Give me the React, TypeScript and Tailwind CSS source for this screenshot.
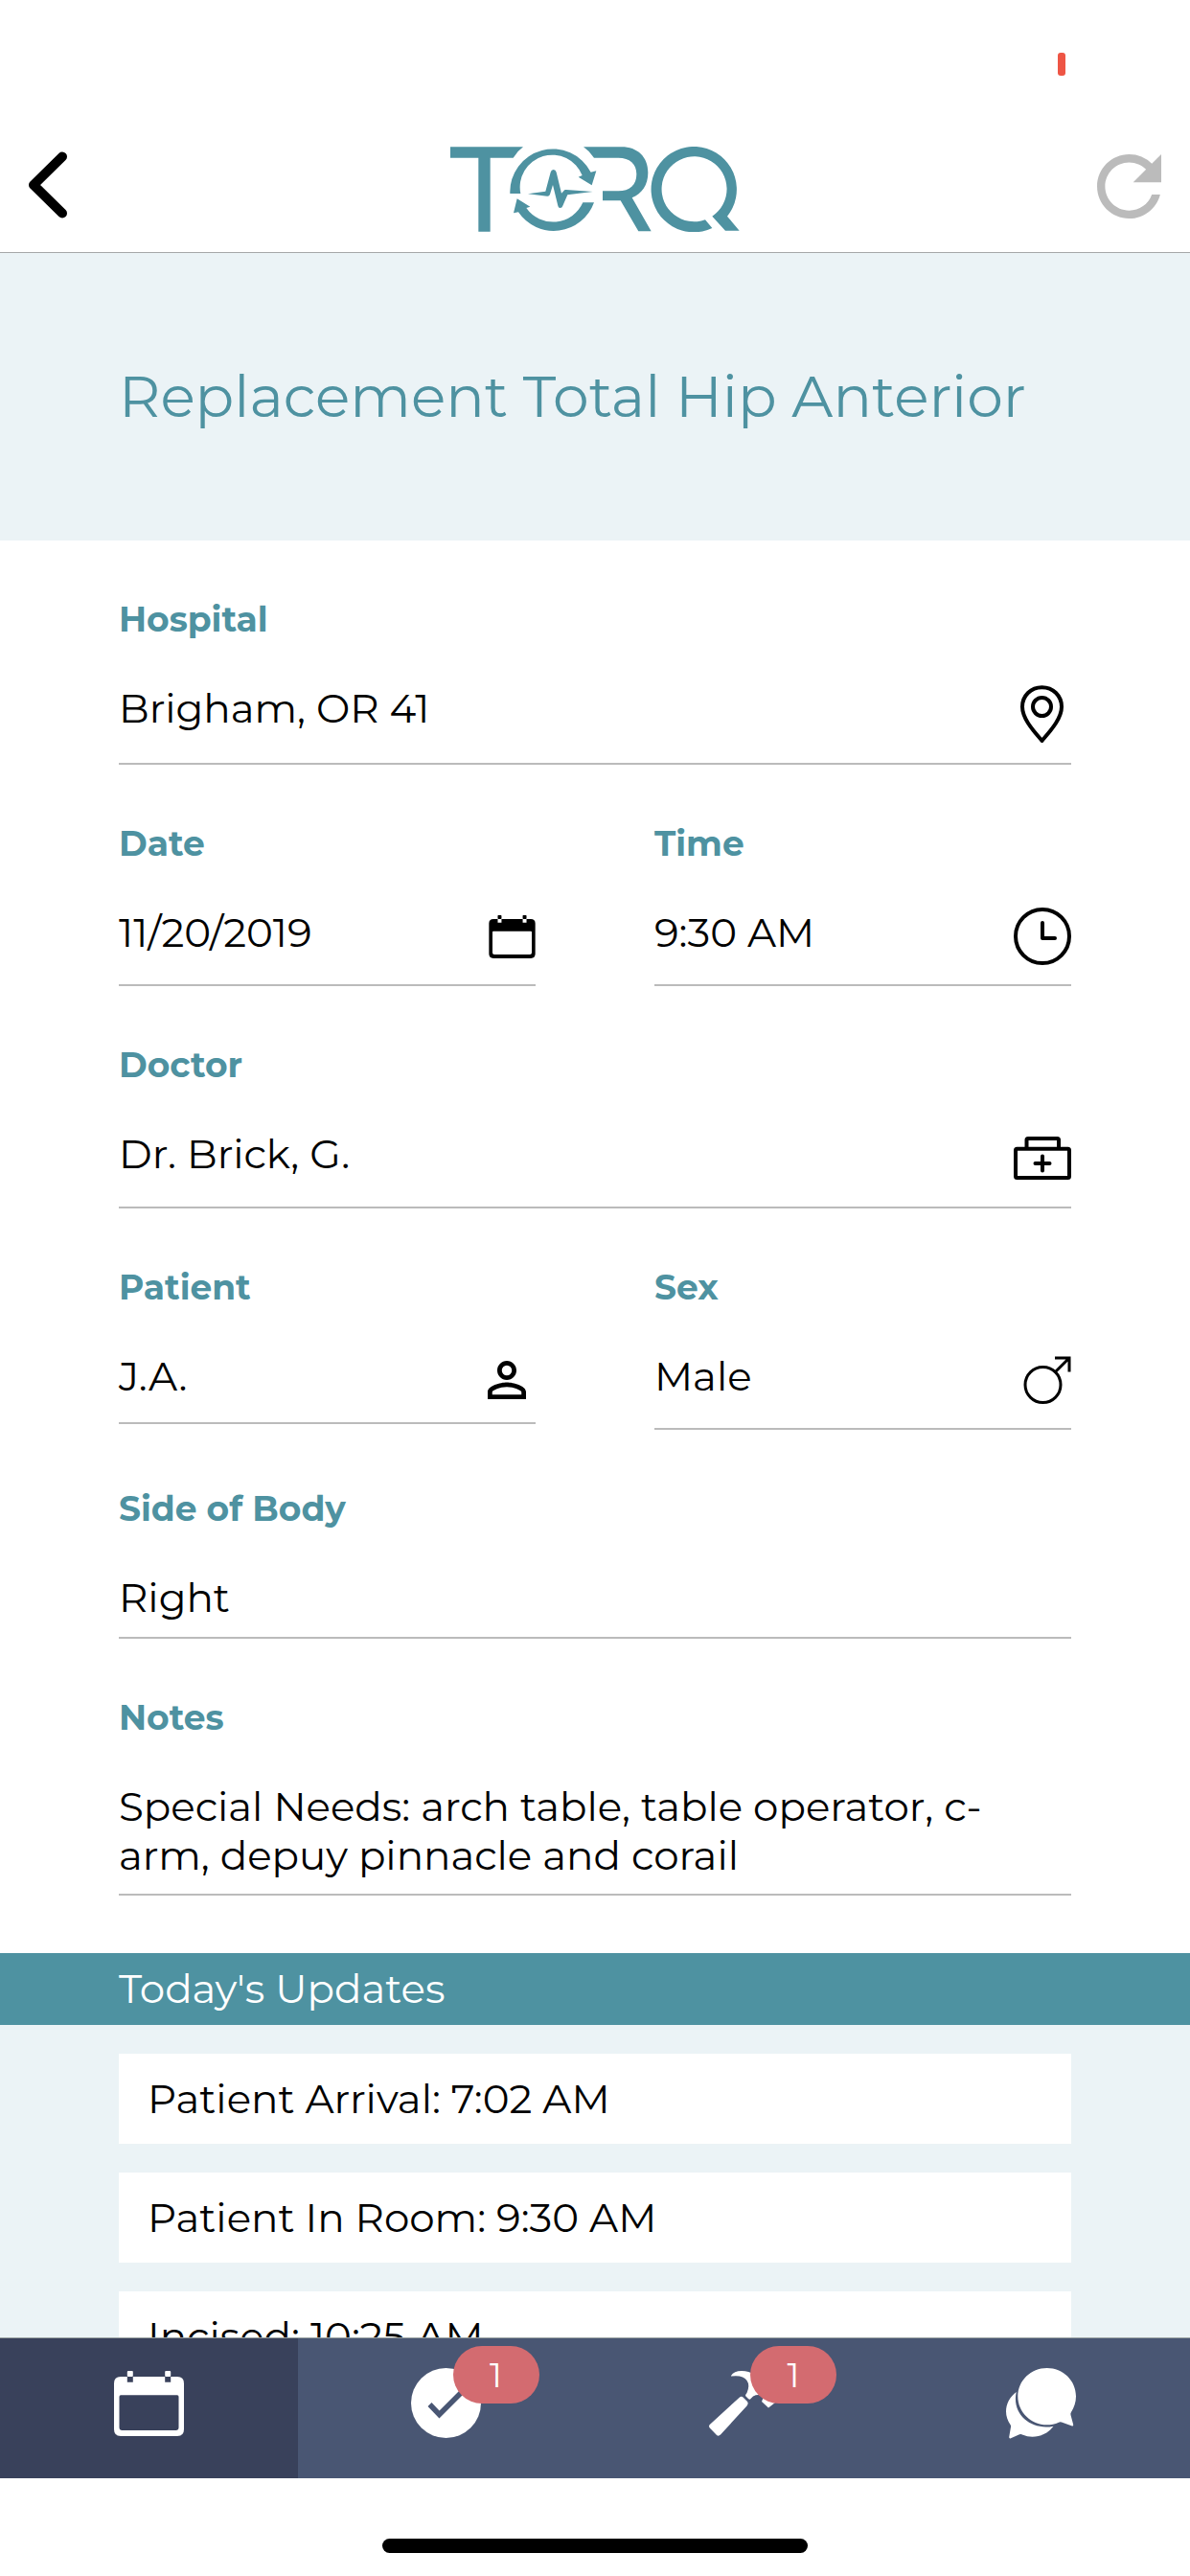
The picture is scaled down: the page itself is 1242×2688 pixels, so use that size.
import React from "react";

function TorqLogo() {
  return (
    <svg viewBox="90 70 906 267" className="h-[89px] w-[302px]" fill="#4e92a1" aria-label="TORQ">
      <path d="M90 71H318Q300 84 287 105H215V336H178V105H90Z" />
      <path d="M277 217A134 134 0 0 1 530 150L547 146L533 191L491 165L503 160A101 101 0 0 0 310 217Z" />
      <path d="M505 245H540A134 134 0 0 1 303 275L288 278L299 233L340 258L328 262A102 102 0 0 0 505 245Z" />
      <path d="M333 218L388 210L404 150Q406 142 413 142Q420 142 422 150L438 216L445 209Q447 204 453 205L536 211L457 221L442 255Q440 262 434 262Q428 262 427 255L411 190L402 219Q400 226 393 225Z" />
      <path d="M507 71H626C676 71 709 102 709 152C709 190 690 217 659 230L719 335H679L623 239H567V209H616C652 209 673 190 673 156C673 124 652 105 616 105H540Q527 85 507 71Z" />
      <path d="M910 325A134 134 0 1 1 957 288L995 333H951L910 288A102 102 0 1 0 888 299Z" />
    </svg>
  );
}

function BackIcon() {
  return (
    <svg viewBox="0 0 42 70" className="h-[70px] w-[42px]" fill="none" stroke="#000" strokeWidth="10" strokeLinecap="round" strokeLinejoin="round">
      <path d="M36 5.500L6 35L36 64.500" />
    </svg>
  );
}

function RefreshIcon() {
  return (
    <svg viewBox="4 4 16 16" className="h-[67px] w-[67px]" fill="#bbb">
      <path d="M17.650 6.350A7.958 7.958 0 0 0 12 4c-4.420 0-7.990 3.580-7.990 8s3.570 8 7.990 8c3.730 0 6.840-2.550 7.730-6h-2.080A5.990 5.990 0 0 1 12 18c-3.310 0-6-2.690-6-6s2.690-6 6-6c1.660 0 3.140.690 4.220 1.780L13 11h7V4l-2.350 2.350z" />
    </svg>
  );
}

function CalendarIcon({ className }: { className: string }) {
  return (
    <svg viewBox="0 0 73 68" className={className} fill="currentColor">
      <path
        fillRule="evenodd"
        d="M7 6H13.800V11.700H19.800V6H53.200V11.700H59.200V6H66Q73 6 73 13V61Q73 68 66 68H7Q0 68 0 61V13Q0 6 7 6ZM7 25.300Q5.500 25.300 5.500 27V59Q5.500 62 8.500 62H64.500Q67.500 62 67.500 59V27Q67.500 25.300 66 25.300Z"
      />
      <rect x="13.800" y="0" width="6" height="6" rx="1" />
      <rect x="53.200" y="0" width="6" height="6" rx="1" />
    </svg>
  );
}

function PinIcon() {
  return (
    <svg viewBox="0 0 60 60" className="mt-0.5 size-[60px]" fill="none" stroke="#000" strokeWidth="4" strokeLinejoin="round">
      <path d="M29.500 58C23 50 9 36 9 22.500C9 11 18 2.200 29.500 2.200S50 11 50 22.500C50 36 36 50 29.500 58Z" />
      <circle cx="29.500" cy="22.500" r="9.500" />
    </svg>
  );
}

function ClockIcon() {
  return (
    <svg viewBox="0 0 60 60" className="size-[60px]" fill="none" stroke="#000" strokeWidth="4" strokeLinecap="round" strokeLinejoin="round">
      <circle cx="30" cy="30" r="28" />
      <path d="M30 16V32H43" />
    </svg>
  );
}

function BagIcon() {
  return (
    <svg viewBox="0 0 60 45" className="mt-2 h-[45px] w-[60px]" fill="none" stroke="#000" strokeWidth="4" strokeLinejoin="round">
      <rect x="2" y="12.700" width="56" height="30.300" rx="1.500" />
      <path d="M13.500 12V3.500Q13.500 2 15 2H45.500Q47 2 47 3.500V12" />
      <path d="M30 20.500V35.500M22.500 28H37.500" strokeLinecap="round" />
    </svg>
  );
}

function PersonIcon() {
  return (
    <svg viewBox="4 4 16 16" className="mt-2.5 mr-2.5 size-10">
      <path d="M12 5.900a2.100 2.100 0 1 1 0 4.200 2.100 2.100 0 0 1 0-4.200m0 9c2.970 0 6.100 1.460 6.100 2.100v1.100H5.900V17c0-.640 3.130-2.100 6.100-2.100M12 4C9.790 4 8 5.790 8 8s1.790 4 4 4 4-1.790 4-4-1.790-4-4-4zm0 9c-2.670 0-8 1.340-8 4v3h16v-3c0-2.660-5.330-4-8-4z" />
    </svg>
  );
}

function MaleIcon() {
  return (
    <svg viewBox="0 0 50 50" className="mt-[5px] size-[50px]" fill="none" stroke="#000" strokeWidth="3">
      <circle cx="20.500" cy="30" r="18.500" />
      <path d="M33.500 16.500L48 2M33 2H48V16.500" />
    </svg>
  );
}

function CheckIcon() {
  return (
    <svg viewBox="0 0 73 73" className="size-[73px]">
      <circle cx="36.500" cy="36.500" r="36.500" fill="#fff" />
      <path d="M19.500 38L29.500 48.500L54 24" fill="none" stroke="#495673" strokeWidth="5.500" />
    </svg>
  );
}

function HammerIcon() {
  return (
    <svg viewBox="0 0 73 68" className="h-[68px] w-[73px]" fill="#fff">
      <path d="M23 5Q26 0 34 0Q42 0 47 4L73 30L62 38.500L55 32L57 27Q52 23.500 46 26.500L43 29.500Q42 30 41 29L38 26Q38 24.500 39.500 23Q43 15 39.500 10Q35.500 3.800 23 5.500Z" />
      <path d="M31.700 27.700Q34 25.500 36 28L40 32Q41.500 34 39.500 36.500L12 66.500Q10 68.500 8 67L.800 59.500Q-.700 57.500.800 56Z" />
    </svg>
  );
}

function ChatIcon() {
  return (
    <svg viewBox="0 0 73 74" className="h-[74px] w-[73px]" fill="#fff">
      <path d="M42.700 0C59.500 0 73 13 73 29.500C73 36 71 41 68 46Q67 47.500 67.500 49L70.200 59Q70.400 60.800 69 60.400L58 56.600Q56.500 56 55 56.700C51 58.500 47 59.300 42.700 59.300C26 59.300 12.300 46 12.300 29.500S26 0 42.700 0Z" />
      <path d="M10.700 25C4 30 0 37.500 0 45.300C0 50.500 1.700 55 4.600 59.200Q5.200 60.200 5 61.500L3.200 72Q3.200 74 5 73.200L14 69.300Q15.500 68.700 17 69.400Q22 71.700 27.500 71.700C36 71.700 44 68 49.500 60.700C27 65.500 5.500 49 10.700 25Z" />
    </svg>
  );
}

function Field({
  label,
  children,
  icon,
  rowClass,
}: {
  label: string;
  children: React.ReactNode;
  icon?: React.ReactNode;
  rowClass: string;
}) {
  return (
    <div className="min-w-0 flex-1">
      <div className="mb-[45px] h-11 text-[36px] leading-[44px] font-bold whitespace-nowrap text-[#4e92a1]">{label}</div>
      <div className={"box-content flex items-start justify-between border-b-2 border-[#bbb] text-[42px] leading-[51px] " + rowClass}>
        <div className="pt-px whitespace-nowrap">{children}</div>
        {icon}
      </div>
    </div>
  );
}

function Update({ children }: { children: React.ReactNode }) {
  return (
    <div className="h-[94px] shrink-0 bg-white pt-[22px] pl-[30px] text-[42px] leading-[51px] whitespace-nowrap">{children}</div>
  );
}

function Badge() {
  return (
    <span className="absolute top-2 left-[162px] flex h-[60px] w-[90px] items-center justify-center rounded-[30px] bg-[#d36b70] text-[36px] leading-none text-white">
      1
    </span>
  );
}

export default function App() {
  return (
    <div className="flex h-[2688px] w-[1242px] flex-col overflow-hidden bg-white font-['Montserrat','Inter',sans-serif] font-normal text-black">
      <div className="flex h-[135px] shrink-0 justify-end pt-[55px] pr-[130px]">
        <div className="h-6 w-2 rounded-[3px] bg-[#ee5545]" />
      </div>
      <header className="flex h-[129px] shrink-0 items-start justify-between border-b border-[#a5a8a9] pr-[30px] pl-[29px]">
        <div className="w-[67px] pt-[23px]">
          <BackIcon />
        </div>
        <div className="pt-[18px]">
          <TorqLogo />
        </div>
        <div className="pt-[26px]">
          <RefreshIcon />
        </div>
      </header>

      <main className="min-h-0 flex-1 overflow-hidden">
        <div className="h-[300px] bg-[#ebf3f6] pt-[114px] pl-[124px]">
          <h1 className="text-[60px] leading-[72px] whitespace-nowrap text-[#4e92a1]">Replacement Total Hip Anterior</h1>
        </div>

        <section className="flex flex-col gap-[60px] px-[124px] py-[60px]">
          <Field label="Hospital" rowClass="h-[83px]" icon={<PinIcon />}>
            Brigham, OR 41
          </Field>
          <div className="flex items-start gap-[124px]">
            <Field label="Date" rowClass="h-[80px]" icon={<CalendarIcon className="mt-2 h-[45px] w-[49px]" />}>
              11/20/2019
            </Field>
            <Field label="Time" rowClass="h-[80px]" icon={<ClockIcon />}>
              9:30 AM
            </Field>
          </div>
          <Field label="Doctor" rowClass="h-[81px]" icon={<BagIcon />}>
            Dr. Brick, G.
          </Field>
          <div className="flex items-start gap-[124px]">
            <Field label="Patient" rowClass="h-[74px]" icon={<PersonIcon />}>
              J.A.
            </Field>
            <Field label="Sex" rowClass="h-[80px]" icon={<MaleIcon />}>
              Male
            </Field>
          </div>
          <Field label="Side of Body" rowClass="h-[67px]">
            Right
          </Field>
          <Field label="Notes" rowClass="h-[117px]">
            <span>Special Needs: arch table, table operator, c-</span>
            <br />
            <span>arm, depuy pinnacle and corail</span>
          </Field>
        </section>

        <h2 className="h-[75px] bg-[#4e92a1] pt-[12px] pl-[124px] text-[42px] leading-[51px] text-white">Today's Updates</h2>
        <section className="flex flex-col gap-[30px] bg-[#ebf3f6] px-[124px] pt-[30px] pb-[30px]">
          <Update>Patient Arrival: 7:02 AM</Update>
          <Update>Patient In Room: 9:30 AM</Update>
          <Update>Incised: 10:25 AM</Update>
        </section>
      </main>

      <nav className="grid h-[147px] shrink-0 grid-cols-4 border-t border-[#9ba3a3] bg-[#495673]">
        <div className="flex justify-center bg-[#39415b] pt-[34px] text-white">
          <CalendarIcon className="h-[68px] w-[73px]" />
        </div>
        <div className="relative flex justify-center pt-[31px]">
          <CheckIcon />
          <Badge />
        </div>
        <div className="relative flex justify-center pt-[34px]">
          <HammerIcon />
          <Badge />
        </div>
        <div className="flex justify-center pt-[31px]">
          <ChatIcon />
        </div>
      </nav>
      <div className="flex h-[102px] shrink-0 justify-center pt-[63px]">
        <div className="h-[15px] w-[444px] rounded-full bg-black" />
      </div>
    </div>
  );
}
